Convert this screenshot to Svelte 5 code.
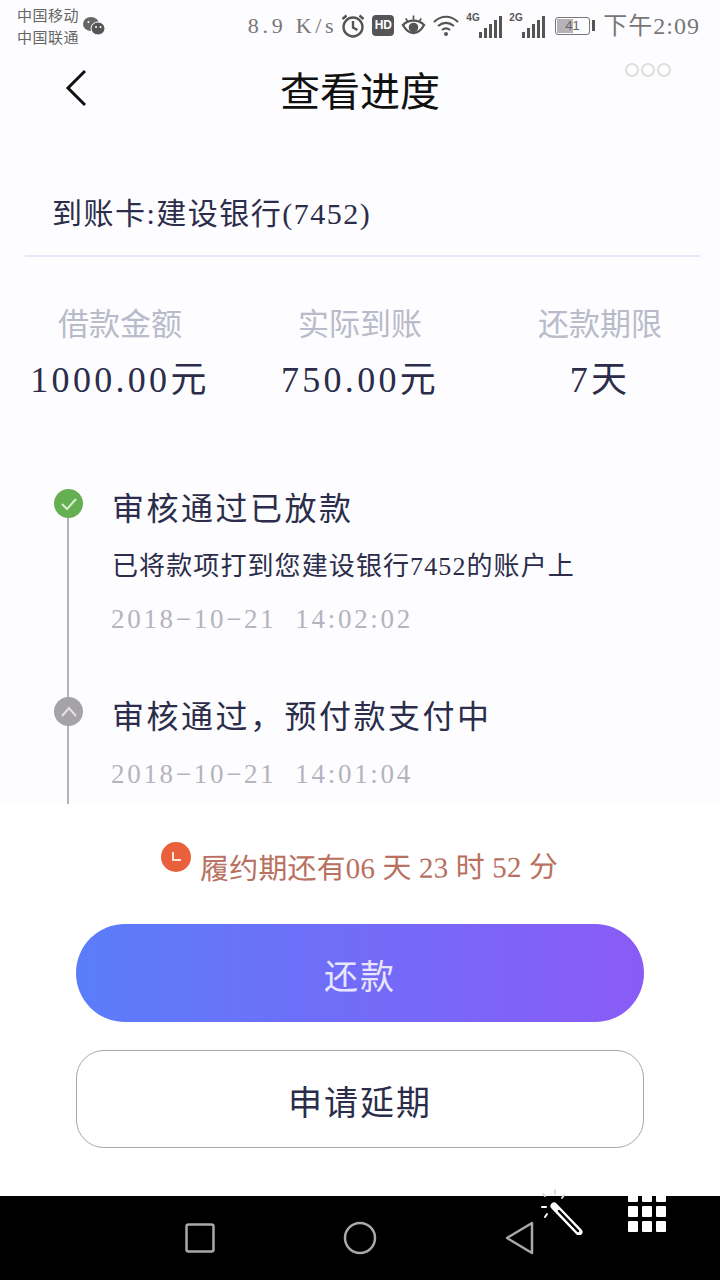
<script lang="ts">
  const stats = [
    { label: '借款金额', value: '1000.00元' },
    { label: '实际到账', value: '750.00元' },
    { label: '还款期限', value: '7天' },
  ];
  const bars = [6, 10, 14, 18, 22];
</script>

<div class="page">
  <div class="top">
    <header class="status">
      <div class="carrier">
        <div>中国移动</div>
        <div>中国联通</div>
      </div>
      <svg class="wechat" width="24" height="20" viewBox="0 0 24 20">
        <ellipse cx="9" cy="8" rx="8" ry="7" fill="#666" />
        <ellipse cx="16" cy="12.5" rx="7" ry="6.5" fill="#555" stroke="#fff" />
        <circle cx="6.5" cy="6" r="1" fill="#fff" />
        <circle cx="14" cy="11" r="1" fill="#fff" />
        <circle cx="18.5" cy="11" r="1" fill="#fff" />
      </svg>
      <div class="status-right">
        <span class="speed">8.9 K/s</span>
        <svg width="24" height="24" viewBox="0 0 24 24" fill="none" stroke="#555" stroke-width="2.4">
          <circle cx="12" cy="13" r="9.5" />
          <path d="M12 7v6.500l4.500 2.500M1.500 5l4-3.500M22.500 5l-4-3.500" />
        </svg>
        <span class="hd">HD</span>
        <svg width="25" height="24" viewBox="0 0 26 24" fill="none" stroke="#555" stroke-width="2.400">
          <path d="M2 11c6-6 16-6 22 0-6 11-16 11-22 0z" />
          <circle cx="13" cy="13.500" r="3.800" fill="#555" />
          <path d="M5 4l2 3.500M13 1v4.500M21 4l-2 3.500" stroke-width="1.800" />
        </svg>
        <svg width="26" height="24" viewBox="0 0 26 24" fill="none" stroke="#555" stroke-width="2.200">
          <path d="M1 8c7-7 17-7 24 0M5 12c5-4 11-4 16 0M9 16c2.500-2 5.500-2 8 0" />
          <circle cx="13" cy="20" r="2" fill="#555" stroke="none" />
        </svg>
        <div class="signal">
          <span class="net">4G</span>
          {#each bars as h}
            <i style="height: {h}px"></i>
          {/each}
        </div>
        <div class="signal">
          <span class="net">2G</span>
          {#each bars as h}
            <i style="height: {h}px"></i>
          {/each}
        </div>
        <div class="battery">
          <div class="cell"><span class="fill"></span><span class="level">41</span></div>
          <span class="cap"></span>
        </div>
        <span class="clock">下午2:09</span>
      </div>
    </header>

    <div class="titlebar">
      <svg class="back" width="24" height="38" viewBox="0 0 24 38" fill="none" stroke="#111" stroke-width="3">
        <path d="M20 2L3 19l17 17" />
      </svg>
      <h1>查看进度</h1>
      <div class="more"><i></i><i></i><i></i></div>
    </div>

    <div class="card-row">到账卡:建设银行(7452)</div>

    <div class="stats">
      {#each stats as s}
        <div class="stat">
          <div class="stat-label">{s.label}</div>
          <div class="stat-value">{s.value}</div>
        </div>
      {/each}
    </div>

    <div class="timeline">
      <div class="step first">
        <div class="dot green">
          <svg width="18" height="14" viewBox="0 0 18 14" fill="none" stroke="#d8f0cf" stroke-width="2">
            <path d="M2 7l5 5 9-10" />
          </svg>
        </div>
        <div class="step-title">审核通过已放款</div>
        <div class="step-desc">已将款项打到您建设银行7452的账户上</div>
        <div class="step-time">2018−10−21&nbsp; 14:02:02</div>
      </div>
      <div class="step">
        <div class="dot grey">
          <svg width="18" height="12" viewBox="0 0 18 12" fill="none" stroke="#e4e2e4" stroke-width="2">
            <path d="M2 10l7-8 7 8" />
          </svg>
        </div>
        <div class="step-title">审核通过&#xFF0C;预付款支付中</div>
        <div class="step-time second">2018−10−21&nbsp; 14:01:04</div>
      </div>
    </div>
  </div>

  <div class="bottom">
    <div class="notice">
      <span class="clock-dot">
        <svg width="14" height="14" viewBox="0 0 14 14" fill="none" stroke="#fde6dc" stroke-width="2">
          <path d="M4 2v8h8" />
        </svg>
      </span>
      <span class="notice-text">履约期还有06 天 23 时 52 分</span>
    </div>
    <button class="primary">还款</button>
    <button class="secondary">申请延期</button>
  </div>

  <nav class="navbar">
    <svg class="nav-square" width="32" height="32" viewBox="0 0 32 32" fill="none" stroke="#a9a9a9" stroke-width="2.500">
      <rect x="2.500" y="2.500" width="27" height="27" rx="2" />
    </svg>
    <svg class="nav-circle" width="34" height="34" viewBox="0 0 34 34" fill="none" stroke="#a9a9a9" stroke-width="2.500">
      <circle cx="17" cy="17" r="15" />
    </svg>
    <svg class="nav-back" width="32" height="34" viewBox="0 0 32 34" fill="none" stroke="#a9a9a9" stroke-width="2.500" stroke-linejoin="round">
      <path d="M28 2v30L3 17z" />
    </svg>
    <svg class="wand" width="46" height="46" viewBox="0 0 46 46" fill="none" stroke="#fff" stroke-linecap="round">
      <path d="M16 17l25 26" stroke-width="7" />
      <path d="M21 22l19 20" stroke="#000" stroke-width="2.500" />
      <path d="M4 18h4M7 28l2-3" stroke-width="2" />
      <path d="M5 5l2 2M17 1v4M26 6l-2 3" stroke="#ddd" stroke-width="2" />
    </svg>
    <div class="grid-icon">
      {#each Array(9) as _}
        <i></i>
      {/each}
    </div>
  </nav>
</div>

<style>
  :global(body) {
    margin: 0;
    background: #fff;
  }
  .page {
    width: 720px;
    height: 1280px;
    display: flex;
    flex-direction: column;
    position: relative;
    overflow: hidden;
    font-family: 'Liberation Serif', 'Noto Sans CJK SC', serif;
    color: #2b2d4a;
  }
  .top {
    height: 806px;
    background: #fdfcfe;
    flex: none;
  }
  .status {
    height: 50px;
    padding: 1px 20px 0 17px;
    box-sizing: border-box;
    display: flex;
    align-items: center;
    color: #555;
  }
  .carrier {
    font-size: 15px;
    line-height: 22px;
    letter-spacing: 0.5px;
    color: #666;
    font-family: 'Noto Sans CJK SC', sans-serif;
  }
  .wechat {
    margin-left: 3px;
  }
  .status-right {
    margin-left: auto;
    display: flex;
    align-items: center;
    gap: 7px;
  }
  .speed {
    font-size: 22px;
    letter-spacing: 3.700px;
    color: #777;
    margin-right: -3px;
  }
  .hd {
    width: 22px;
    height: 21px;
    border-radius: 4px;
    background: #555;
    color: #fff;
    font: bold 12px/21px 'Liberation Sans', sans-serif;
    text-align: center;
  }
  .signal {
    position: relative;
    width: 36px;
    height: 24px;
    display: flex;
    align-items: flex-end;
    justify-content: flex-end;
    gap: 2px;
  }
  .signal i {
    width: 3px;
    background: #555;
  }
  .net {
    position: absolute;
    left: 0;
    top: -2px;
    font: bold 10px 'Liberation Sans', sans-serif;
  }
  .battery {
    display: flex;
    align-items: center;
    gap: 2px;
    margin-left: 3px;
  }
  .cell {
    position: relative;
    width: 35px;
    height: 18px;
    border: 1px solid #777;
    border-radius: 3px;
    box-sizing: border-box;
  }
  .fill {
    position: absolute;
    left: 1px;
    top: 1px;
    bottom: 1px;
    width: 16px;
    background: #b5b3b8;
  }
  .level {
    position: absolute;
    left: 9px;
    top: 0;
    font: 13px/16px 'Liberation Sans', sans-serif;
    color: #666;
  }
  .cap {
    width: 3px;
    height: 11px;
    background: #555;
  }
  .clock {
    font-size: 24px;
    line-height: 28px;
    color: #777;
    margin: 0 0 0 1px;
    letter-spacing: 1px;
  }
  .titlebar {
    height: 84px;
    padding-bottom: 6px;
    box-sizing: border-box;
    position: relative;
    display: flex;
    align-items: center;
    justify-content: center;
  }
  .back {
    position: absolute;
    left: 65px;
    top: 19px;
  }
  h1 {
    margin: 0;
    font-size: 40px;
    font-weight: 400;
    color: #111;
  }
  .more {
    position: absolute;
    left: 625px;
    top: 13px;
    display: flex;
    gap: 2px;
  }
  .more i {
    width: 10px;
    height: 10px;
    border: 2px solid #ddd;
    border-radius: 50%;
  }
  .card-row {
    margin: 0 20px 0 25px;
    padding: 0 0 22px 27px;
    height: 123px;
    box-sizing: border-box;
    display: flex;
    align-items: flex-end;
    font-size: 30px;
    letter-spacing: 1.500px;
    border-bottom: 2px solid #e8e6f6;
  }
  .stats {
    display: grid;
    grid-template-columns: 240px 240px 240px;
    margin-top: 43px;
    text-align: center;
  }
  .stat-label {
    font-size: 31px;
    line-height: 50px;
    color: #b9bbca;
  }
  .stat-value {
    margin-top: 5px;
    font-size: 36px;
    line-height: 50px;
    letter-spacing: 3.300px;
  }
  .timeline {
    margin-top: 84px;
  }
  .step {
    display: flow-root;
    position: relative;
    padding-left: 112px;
    height: 107px;
  }
  .step.first {
    height: 208px;
  }
  .step::before {
    content: '';
    position: absolute;
    left: 67px;
    top: 6px;
    bottom: 0;
    width: 2px;
    background: #b4b2b4;
  }
  .dot {
    position: absolute;
    left: 54px;
    top: 0;
    width: 29px;
    height: 29px;
    border-radius: 50%;
    display: flex;
    align-items: center;
    justify-content: center;
  }
  .green {
    background: #65ae52;
  }
  .grey {
    background: #a5a3a6;
  }
  .step-title {
    font-size: 32px;
    line-height: 40px;
    letter-spacing: 2.500px;
  }
  .step-desc {
    font-size: 26px;
    line-height: 36px;
    letter-spacing: 1.100px;
    margin-top: 20px;
  }
  .step-time {
    margin: 16px 0 0 -1px;
    font-size: 27px;
    line-height: 36px;
    letter-spacing: 2.700px;
    color: #b5b4bd;
  }
  .step-time.second {
    margin-top: 19px;
  }
  .bottom {
    flex: 1;
    background: #fff;
    display: flex;
    flex-direction: column;
    align-items: center;
  }
  .notice {
    height: 118px;
    display: flex;
    align-items: center;
    gap: 9px;
    box-sizing: border-box;
  }
  .clock-dot {
    width: 30px;
    height: 30px;
    margin-top: -17px;
    border-radius: 50%;
    background: #e8603c;
    display: flex;
    align-items: center;
    justify-content: center;
  }
  .notice-text {
    font-size: 29px;
    letter-spacing: 0.150px;
    color: #b9705f;
    white-space: pre;
    transform: rotate(-0.4deg);
  }
  button {
    width: 568px;
    font-family: inherit;
    font-size: 34px;
    letter-spacing: 2px;
    padding: 2px 0 0;
    cursor: pointer;
  }
  .primary {
    height: 98px;
    flex: none;
    border: 0;
    border-radius: 49px;
    background: linear-gradient(90deg, #5a7dfb, #8a5bf6);
    color: #e9e6fb;
  }
  .secondary {
    height: 98px;
    flex: none;
    margin-top: 28px;
    border: 1px solid #a8a8ac;
    border-radius: 28px;
    background: #fff;
    color: #2b2d4a;
  }
  .navbar {
    position: absolute;
    left: 0;
    right: 0;
    bottom: 0;
    height: 84px;
    background: #000;
    display: flex;
    align-items: center;
  }
  .nav-square {
    position: absolute;
    left: 184px;
    top: 26px;
  }
  .nav-circle {
    position: absolute;
    left: 343px;
    top: 25px;
  }
  .nav-back {
    position: absolute;
    left: 504px;
    top: 25px;
  }
  .wand {
    position: absolute;
    left: 538px;
    top: -7px;
  }
  .grid-icon {
    position: absolute;
    left: 628px;
    top: -5px;
    display: grid;
    grid-template-columns: repeat(3, 10px);
    grid-auto-rows: 11px;
    gap: 4px;
  }
  .grid-icon i {
    background: #fff;
    border-radius: 1px;
  }
</style>
